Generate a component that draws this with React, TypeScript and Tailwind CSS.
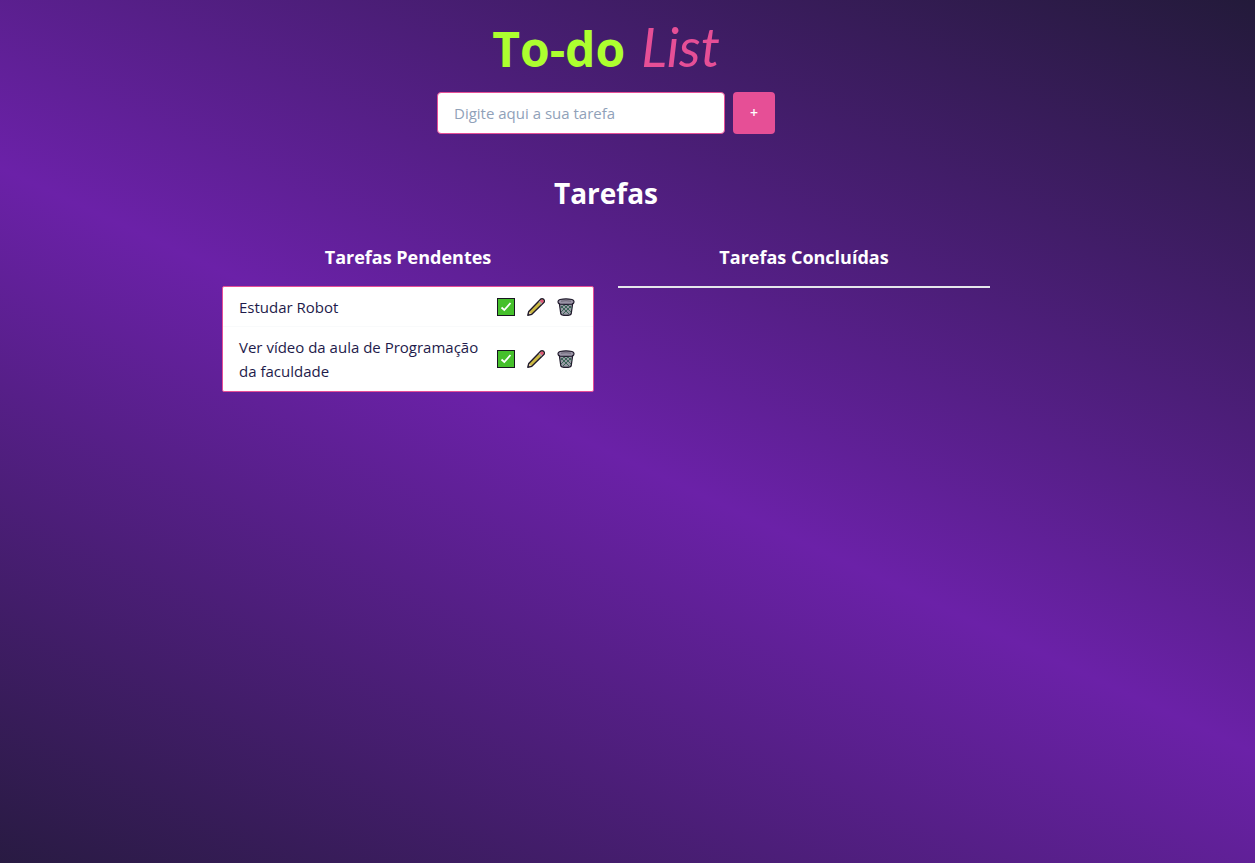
import { useState } from "react";

type Task = { id: number; text: string; done: boolean };

const initialTasks: Task[] = [
  { id: 1, text: "Estudar Robot", done: false },
  { id: 2, text: "Ver vídeo da aula de Programação da faculdade", done: false },
];

function CheckIcon() {
  return (
    <svg viewBox="0 0 18 18" className="size-[18px]" aria-hidden="true">
      <rect width="18" height="18" fill="#17151f" />
      <rect x="1" y="1" width="16" height="16" fill="#45c02b" />
      <path d="M4.5 9.5 7.3 12 13.5 5" fill="none" stroke="#fff" strokeWidth="1.8" />
    </svg>
  );
}

function PencilIcon() {
  return (
    <svg viewBox="0 0 18 18" className="size-[18px]" aria-hidden="true">
      <path d="M.8 17.2 1.8 13.4 13.4 1.4Q15 .2 16.7 1.4 18 3 16.8 4.600L4.800 16.200Z" fill="#ccb943" stroke="#201a2c" strokeWidth="1.4" strokeLinejoin="round" />
      <path d="M12.8 3 13.800 2Q15 1 16.1 2 17.1 3.200 16.200 4.300L15.2 5.300Z" fill="#e0527f" />
      <path d="M11.7 4.100 12.700 3.100 15.100 5.400 14.100 6.400Z" fill="#a9a4b4" />
      <path d="M1.8 16.300 2.400 13.900 4.400 15.700Z" fill="#e9d3ae" />
    </svg>
  );
}

function TrashIcon() {
  return (
    <svg viewBox="0 0 18 18" className="size-[18px]" aria-hidden="true">
      <path d="M2.400 6 3.800 15.800Q4.300 17.400 9 17.400T14.200 15.800L15.600 6Z" fill="#989aa5" stroke="#201a2c" strokeWidth="1.2" />
      <path d="M4 8 12 16M7 7 14 14M11 7 15 11M14 8 6 16M11 7 4 14M7 7 3.500 10.500" stroke="#3c6658" strokeWidth="1" />
      <path d="M1 4Q.8 2.200 3 1.500 9 .1 15 1.500 17.200 2.200 17 4 17 5.500 15 6 9 6.900 3 6 1 5.500 1 4Z" fill="#9a94a6" stroke="#201a2c" strokeWidth="1.2" />
      <path d="M4 3.200Q9 2.200 14 3.200" fill="none" stroke="#6d6877" strokeWidth="1" />
    </svg>
  );
}

export default function App() {
  const [tasks, setTasks] = useState(initialTasks);
  const [draft, setDraft] = useState("");

  const add = () => {
    const text = draft.trim();
    if (!text) return;
    setTasks([...tasks, { id: Date.now(), text, done: false }]);
    setDraft("");
  };
  const complete = (id: number) =>
    setTasks(tasks.map((t) => (t.id === id ? { ...t, done: true } : t)));
  const remove = (id: number) => setTasks(tasks.filter((t) => t.id !== id));
  const edit = (task: Task) => {
    setDraft(task.text);
    remove(task.id);
  };

  return (
    <div className="min-h-screen bg-[linear-gradient(25deg,#231a3a_-4%,#6b21a8_48%,#231a3a_100%)] pr-[43px] font-['Open_Sans','Noto_Sans',sans-serif] text-[#1e1b4b]">
      <main className="mx-auto flex max-w-3xl flex-col items-center pt-6">
        <h1 className="flex h-12 items-baseline gap-4 text-[48px] leading-[46px] font-bold text-[#adff2f]">
          To-do
          <span className="font-['Lato',sans-serif] text-[54px] font-normal text-[#e64f96] italic">List</span>
        </h1>

        <form
          className="mt-5 flex gap-2"
          onSubmit={(e) => {
            e.preventDefault();
            add();
          }}
        >
          <input
            aria-label="Nova tarefa"
            className="h-[42px] w-72 rounded border border-[#e64f96] bg-white px-4 text-[15px] placeholder:text-slate-400"
            placeholder="Digite aqui a sua tarefa"
            value={draft}
            onChange={(e) => setDraft(e.target.value)}
          />
          <button type="submit" aria-label="Adicionar" className="size-[42px] rounded bg-[#e64f96] text-sm font-semibold text-white">
            +
          </button>
        </form>

        <h2 className="mt-10 text-[28px] leading-[38px] font-bold text-white">Tarefas</h2>

        <div className="mt-[30px] grid w-full grid-cols-2 items-start gap-6">
          <section>
            <h3 className="text-center text-lg leading-[30px] font-bold text-white">Tarefas Pendentes</h3>
            <ul className="mt-[14px] rounded-xs border border-[#e64f96] bg-white">
              {tasks.filter((t) => !t.done).map((task) => (
                <li key={task.id} className="flex items-center justify-between gap-3 py-2 pr-[18px] pl-4 text-[15px] leading-6 not-first:shadow-[0_-1px_0_#f9fafb]">
                  <span>{task.text}</span>
                  <span className="flex shrink-0 gap-3">
                    <button type="button" aria-label="Concluir" onClick={() => complete(task.id)}><CheckIcon /></button>
                    <button type="button" aria-label="Editar" onClick={() => edit(task)}><PencilIcon /></button>
                    <button type="button" aria-label="Excluir" onClick={() => remove(task.id)}><TrashIcon /></button>
                  </span>
                </li>
              ))}
            </ul>
          </section>
          <section>
            <h3 className="text-center text-lg leading-[30px] font-bold text-white">Tarefas Concluídas</h3>
            <ul className="mt-[14px] border border-gray-200 bg-white">
              {tasks.filter((t) => t.done).map((task) => (
                <li key={task.id} className="px-4 py-2 text-[15px] leading-6 line-through">{task.text}</li>
              ))}
            </ul>
          </section>
        </div>
      </main>
    </div>
  );
}
